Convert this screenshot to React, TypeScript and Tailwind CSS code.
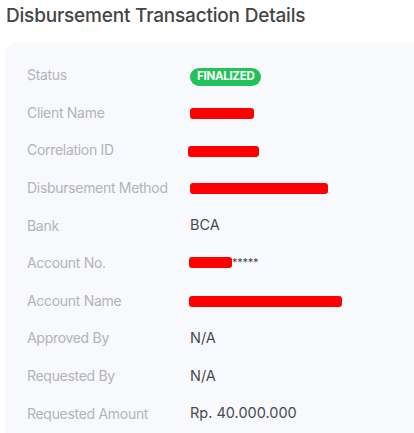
import React from "react";

type Row = { label: string; value: React.ReactNode };

function Redact({ w, off = 0 }: { w: number; off?: number }) {
  return (
    <span
      className="inline-block h-[11px] rounded-[3px] bg-[#ff0000] align-middle"
      style={{ width: w, marginLeft: off }}
    />
  );
}

export default function App() {
  const rows: Row[] = [
    {
      label: "Status",
      value: (
        <span className="inline-flex h-[18px] items-center rounded-full bg-[#22c25a] px-[7px] text-[11.5px] font-bold tracking-tight text-white">
          FINALIZED
        </span>
      ),
    },
    { label: "Client Name", value: <Redact w={64} /> },
    { label: "Correlation ID", value: <Redact w={71} off={-2} /> },
    { label: "Disbursement Method", value: <Redact w={138} /> },
    { label: "Bank", value: "BCA" },
    {
      label: "Account No.",
      value: (
        <span className="inline-flex items-center">
          <Redact w={43} off={-1} />
          <span className="text-[11px] tracking-tight">*****</span>
        </span>
      ),
    },
    { label: "Account Name", value: <Redact w={153} off={-1} /> },
    { label: "Approved By", value: "N/A" },
    { label: "Requested By", value: "N/A" },
    { label: "Requested Amount", value: "Rp. 40.000.000" },
  ];

  return (
    <div className="h-[433px] w-[414px] overflow-hidden bg-white font-['Inter',sans-serif]">
      <h1 className="pl-[6px] pt-[5px] text-[19px] font-medium leading-[22px] tracking-[-0.2px] text-[#454545]">
        Disbursement Transaction Details
      </h1>
      <div className="ml-[5px] mt-[16px] w-[430px] rounded-[10px] bg-[#f8f9fd] pb-[20px] pl-[22px] pt-[13px]">
        {rows.map((r) => (
          <div key={r.label} className="flex h-[37.6px] items-center">
            <div className="w-[163px] text-[14px] tracking-[-0.3px] text-[#b3b3b9]">{r.label}</div>
            <div className="text-[14.5px] text-[#4a4a4f]">{r.value}</div>
          </div>
        ))}
      </div>
    </div>
  );
}
